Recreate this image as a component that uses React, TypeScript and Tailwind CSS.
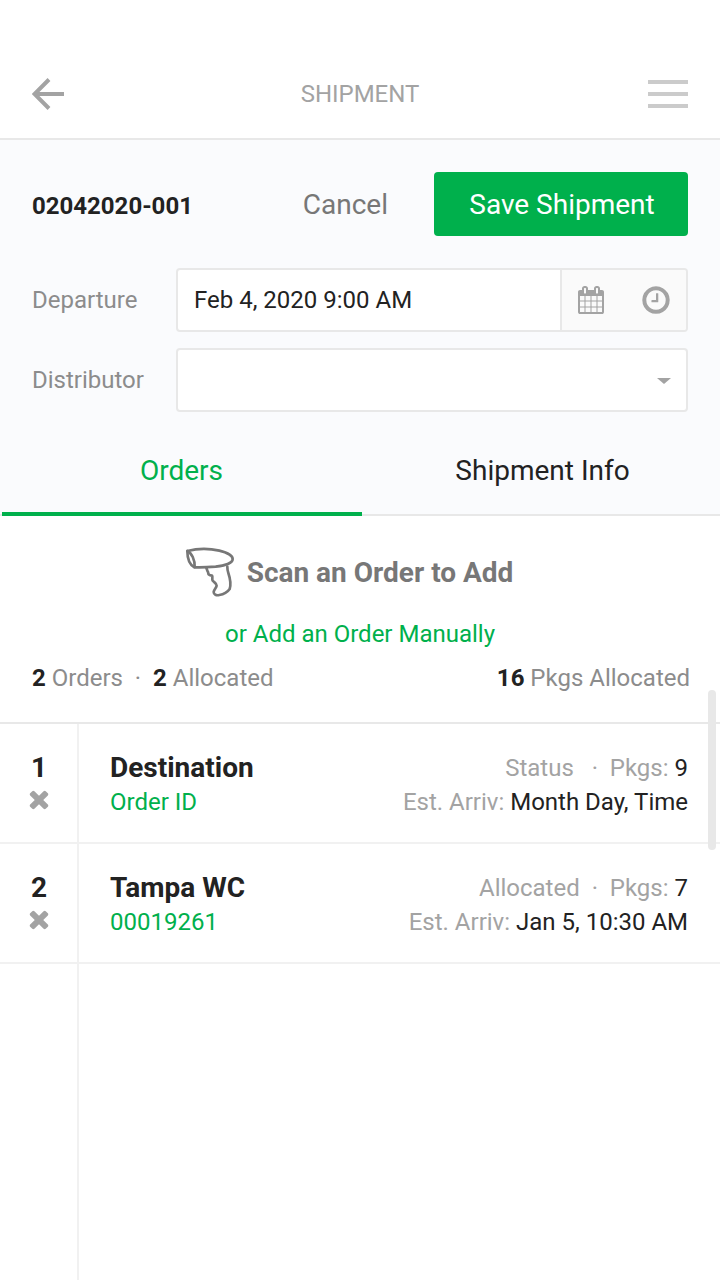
import React from "react";

const CALENDAR =
  "M192 1664h288v-288h-288v288zm352 0h320v-288h-320v288zm-352-352h288v-320h-288v320zm352 0h320v-320h-320v320zm-352-384h288v-288h-288v288zm736 736h320v-288h-320v288zm-384-736h320v-288h-320v288zm768 736h288v-288h-288v288zm-384-352h320v-320h-320v320zm-352-864v-288q0-13-9.500-22.500t-22.500-9.500h-64q-13 0-22.500 9.500t-9.500 22.500v288q0 13 9.500 22.500t22.500 9.500h64q13 0 22.500-9.500t9.500-22.500zm736 864h288v-320h-288v320zm-384-384h320v-288h-320v288zm384 0h288v-288h-288v288zm32-480v-288q0-13-9.500-22.500t-22.500-9.500h-64q-13 0-22.500 9.500t-9.500 22.500v288q0 13 9.500 22.500t22.500 9.500h64q13 0 22.500-9.500t9.500-22.500zm384-64v1280q0 52-38 90t-90 38h-1408q-52 0-90-38t-38-90v-1280q0-52 38-90t90-38h128v-96q0-66 47-113t113-47h64q66 0 113 47t47 113v96h384v-96q0-66 47-113t113-47h64q66 0 113 47t47 113v96h128q52 0 90 38t38 90z";
const CLOCK =
  "M1024 544v448q0 14-9 23t-23 9h-320q-14 0-23-9t-9-23v-64q0-14 9-23t23-9h224v-352q0-14 9-23t23-9h64q14 0 23 9t9 23zm416 352q0-148-73-273t-198-198-273-73-273 73-198 198-73 273 73 273 198 198 273 73 273-73 198-198 73-273zm224 0q0 209-103 385.5t-279.5 279.5-385.5 103-385.5-103-279.5-279.5-103-385.5 103-385.5 279.5-279.5 385.5-103 385.5 103 279.5 279.5 103 385.5z";
const TIMES =
  "M1490 1322q0 40-28 68l-136 136q-28 28-68 28t-68-28l-294-294-294 294q-28 28-68 28t-68-28l-136-136q-28-28-28-68t28-68l294-294-294-294q-28-28-28-68t28-68l136-136q28-28 68-28t68 28l294 294 294-294q28-28 68-28t68 28l136 136q28 28 28 68t-28 68l-294 294 294 294q28 28 28 68z";

function Glyph({ d, className }: { d: string; className: string }) {
  return (
    <svg viewBox="0 0 1792 1792" className={className} fill="currentColor" aria-hidden="true">
      <path d={d} />
    </svg>
  );
}

function ScannerIcon() {
  return (
    <svg
      viewBox="0 0 150 150"
      className="size-[50px]"
      fill="none"
      stroke="currentColor"
      strokeWidth="8"
      strokeLinecap="round"
      strokeLinejoin="round"
      aria-hidden="true"
    >
      <path d="M7 12C35 5 72 4 103 11C128 17 143 27 143 36C143 48 120 56 92 59C68 61 48 62 28 61C14 53 7 33 7 12Z" />
      <path d="M7 12C20 18 30 38 29 60" />
      <path d="M64 62C66 67 66 71 69 75C70 84 73 85 81 86C84 90 80 96 83 101C88 107 95 109 95 116C94 123 87 128 86 135C86 143 94 146 103 144C116 142 127 136 134 126C139 110 134 90 130 78C127 70 127 64 127 59" />
    </svg>
  );
}

type Order = { destination: string; id: string; status: string; pkgs: number; arrival: string };

const orders: Order[] = [
  { destination: "Destination", id: "Order ID", status: "Status ", pkgs: 9, arrival: "Month Day, Time" },
  { destination: "Tampa WC", id: "00019261", status: "Allocated", pkgs: 7, arrival: "Jan 5, 10:30 AM" },
];

function OrderRow({ order, index }: { order: Order; index: number }) {
  return (
    <li className="flex border-b-2 border-[#f1f1f1]">
      <div className="flex w-[79px] shrink-0 flex-col items-center border-r-2 border-[#f1f1f1] pt-[27px] pb-[23px] pl-px">
        <span className="text-[28px] leading-[34px] font-bold">{index}</span>
        <button type="button" aria-label={`Remove ${order.destination}`} className="flex h-[34px] items-center pb-1.5 text-[#a3a3a3]">
          <Glyph d={TIMES} className="size-7" />
        </button>
      </div>
      <div className="flex flex-1 justify-between pt-[27px] pr-8 pb-[23px] pl-[31px] leading-[34px]">
        <div>
          <h2 className="text-[28px] font-bold">{order.destination}</h2>
          <a href="#order" className="text-[#00b04c]">{order.id}</a>
        </div>
        <div className="text-right text-[#a3a3a3]">
          <p className="whitespace-pre">
            {order.status}
            {"  ·  Pkgs: "}
            <span className="text-[#222]">{order.pkgs}</span>
          </p>
          <p>
            Est. Arriv: <span className="text-[#222]">{order.arrival}</span>
          </p>
        </div>
      </div>
    </li>
  );
}

export default function App() {
  return (
    <div className="relative flex min-h-screen flex-col bg-white font-['Roboto',sans-serif] text-2xl text-[#222]">
      <header className="flex items-center justify-between border-b-2 border-[#e8e8e8] px-8 pt-[50px]">
        <button type="button" aria-label="Back" className="flex h-[88px] w-10 items-center text-[#a3a3a3]">
          <svg viewBox="0 0 32 32" className="size-8" fill="none" stroke="currentColor" strokeWidth="4" aria-hidden="true">
            <path d="M17 1.500L2.500 16L17 30.500M3 16H32" />
          </svg>
        </button>
        <h1 className="text-[#a3a3a3]">SHIPMENT</h1>
        <button type="button" aria-label="Menu" className="flex h-[88px] w-10 flex-col justify-center gap-2">
          <span className="h-1 w-full bg-[#cbcbcb]" />
          <span className="h-1 w-full bg-[#cbcbcb]" />
          <span className="h-1 w-full bg-[#cbcbcb]" />
        </button>
      </header>

      <section className="bg-[#fafbfd]">
        <div className="px-8 pt-8">
          <div className="flex items-center">
            <strong className="flex-1 pt-1 font-bold">02042020-001</strong>
            <button type="button" className="mr-[46px] pt-0.5 text-[28px] text-[#777]">Cancel</button>
            <button type="button" className="h-16 w-[254px] rounded-sm bg-[#00b04c] pt-0.5 pl-0.5 text-[28px] text-white">
              Save Shipment
            </button>
          </div>
          <div className="mt-8 flex items-center">
            <label htmlFor="departure" className="w-36 text-[#8c8c8c]">Departure</label>
            <div className="flex h-16 flex-1 overflow-hidden rounded-sm border-2 border-[#e8e8e8] bg-white">
              <input
                id="departure"
                type="text"
                defaultValue="Feb 4, 2020 9:00 AM"
                className="min-w-0 flex-1 px-4 outline-none"
              />
              <div className="flex items-center border-l-2 border-[#e8e8e8] bg-[#fafafa] text-[#a3a3a3]">
                <button type="button" aria-label="Pick date" className="flex h-full w-[58px] items-center justify-center">
                  <Glyph d={CALENDAR} className="size-7" />
                </button>
                <button type="button" aria-label="Pick time" className="flex h-full w-[66px] items-center justify-center pl-1.5">
                  <Glyph d={CLOCK} className="size-8" />
                </button>
              </div>
            </div>
          </div>
          <div className="mt-4 flex items-center">
            <label htmlFor="distributor" className="w-36 text-[#8c8c8c]">Distributor</label>
            <div className="relative h-16 flex-1">
              <select
                id="distributor"
                className="size-full appearance-none rounded-sm border-2 border-[#e8e8e8] bg-white px-4 outline-none"
              >
                <option value="" />
              </select>
              <svg viewBox="0 0 14 6" className="pointer-events-none absolute top-[30px] right-[17px] h-1.5 w-3.5" fill="#a3a3a3" aria-hidden="true">
                <path d="M0 0H14L7 6Z" />
              </svg>
            </div>
          </div>
        </div>
        <div role="tablist" className="relative flex h-26 border-b-2 border-[#e8e8e8] pl-0.5 text-[28px]">
          <button type="button" role="tab" aria-selected="true" className="w-1/2 pt-4 text-[#00b04c]">
            Orders
          </button>
          <button type="button" role="tab" aria-selected="false" className="w-1/2 pt-4 pl-1">
            Shipment Info
          </button>
          <span className="absolute -bottom-0.5 left-0.5 h-1 w-1/2 bg-[#00b04c]" />
        </div>
      </section>

      <section className="border-b-2 border-[#e8e8e8] pb-7">
        <div className="flex items-center justify-center gap-3 pt-[31px] pr-[22px] text-[#777]">
          <ScannerIcon />
          <span className="pt-0.5 text-[28px] font-bold">Scan an Order to Add</span>
        </div>
        <div className="mt-[21px] text-center">
          <a href="#add" className="text-[#00b04c]">or Add an Order Manually</a>
        </div>
        <div className="mt-3 flex justify-between pr-[30px] pl-8 text-[#8c8c8c]">
          <p className="whitespace-pre">
            <b className="text-[#222]">2</b>
            {" Orders  ·  "}
            <b className="text-[#222]">2</b>
            {" Allocated"}
          </p>
          <p>
            <b className="text-[#222]">16</b> Pkgs Allocated
          </p>
        </div>
      </section>

      <ul>
        {orders.map((order, i) => (
          <OrderRow key={order.id} order={order} index={i + 1} />
        ))}
      </ul>
      <div className="w-[79px] flex-1 border-r-2 border-[#f1f1f1]" />

      <div className="absolute top-[690px] right-1 h-40 w-2 rounded-full bg-[#e8e8e8]" />
    </div>
  );
}
